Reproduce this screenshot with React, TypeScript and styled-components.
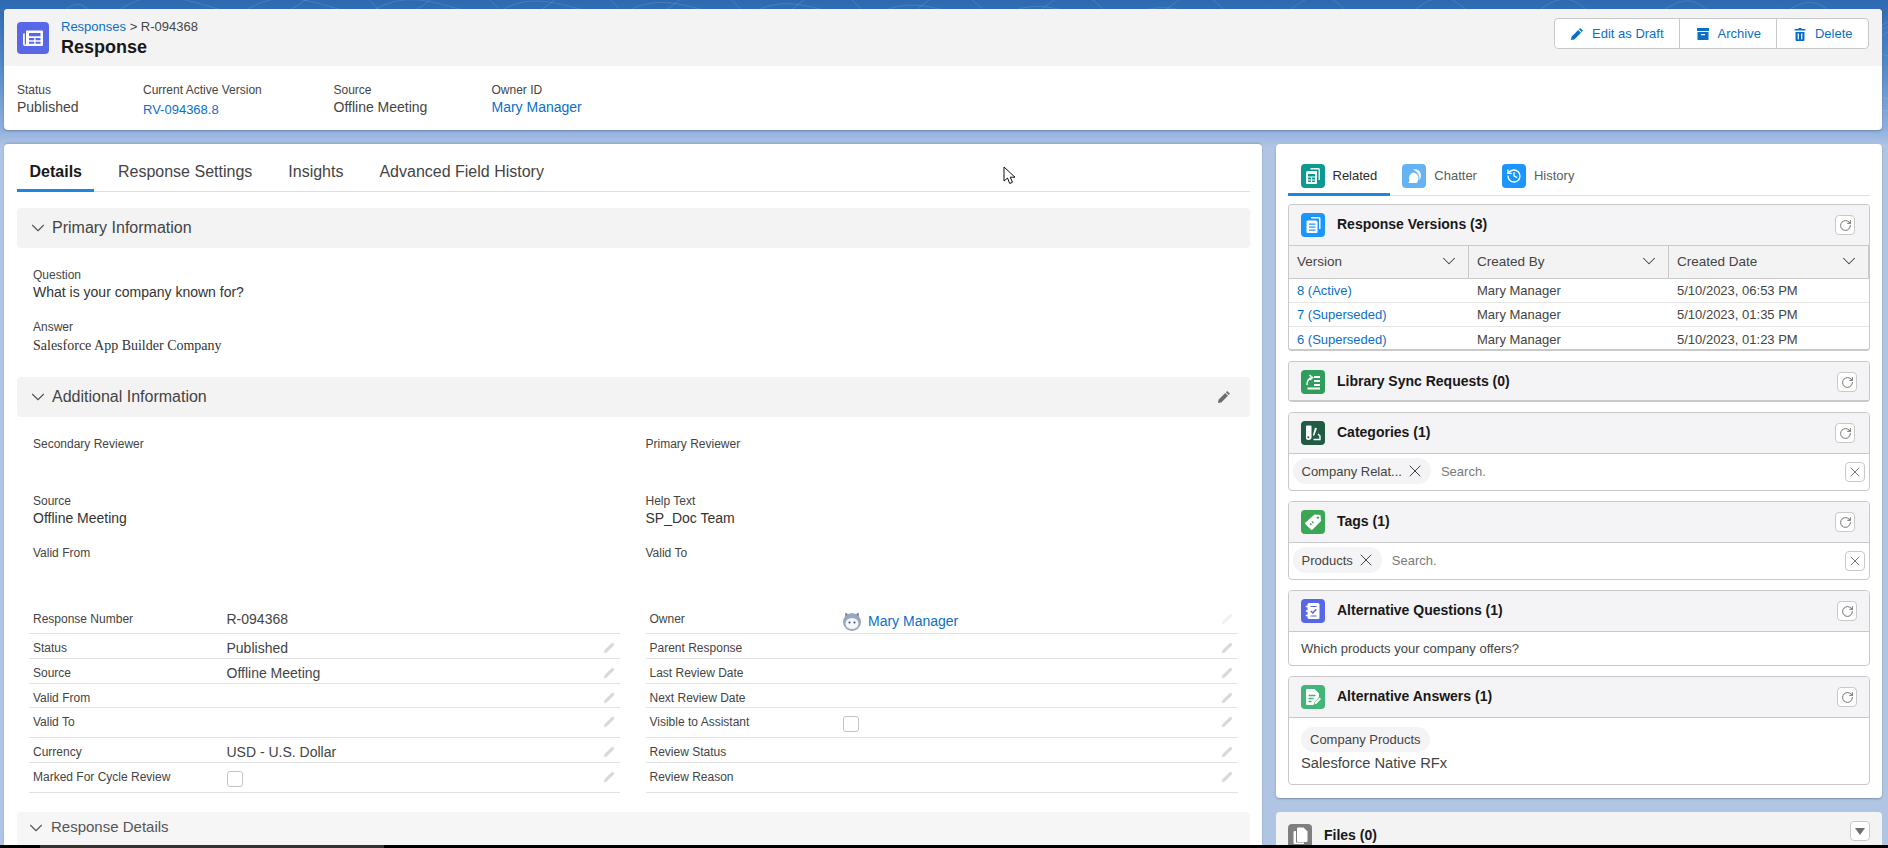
import React from "react";
import styled, { createGlobalStyle } from "styled-components";
import { ChevronDown, History, Pencil, RotateCw, X } from "lucide-react";

const GlobalStyle = createGlobalStyle`
  html, body {
    margin: 0;
    padding: 0;
    background: #b0c4e4;
    font-family: "Liberation Sans", Arial, sans-serif;
    color: #444444;
  }
  * {
    box-sizing: border-box;
  }
`;

const Page = styled.div`
  position: relative;
  width: 1888px;
  height: 848px;
  overflow: hidden;
  display: flex;
  flex-direction: column;
  background: linear-gradient(180deg, #2d69b1 0, #4f86c6 60px, #8fb0de 130px, #b0c4e4 146px, #b0c4e4 100%);
`;

const Contours = styled.svg`
  position: absolute;
  left: 0;
  top: 0;
  width: 1888px;
  height: 144px;
  pointer-events: none;
`;

const Content = styled.div`
  position: relative;
  flex: 1;
  min-height: 0;
  overflow: hidden;
  padding: 9px 6px 0 4px;
  display: flex;
  flex-direction: column;
  gap: 14px;
`;

const BottomBar = styled.div`
  flex: 0 0 3px;
  display: flex;
  background: #000000;
  padding-left: 40px;
  position: relative;
`;

const BottomThumb = styled.div`
  width: 344px;
  background: #333333;
`;

/* header card */
const HeaderCard = styled.header`
  flex: 0 0 121px;
  background: #ffffff;
  border-radius: 4px;
  overflow: hidden;
  box-shadow: 0 1px 2px rgba(60, 70, 90, 0.45);
`;

const HeaderTop = styled.div`
  height: 57px;
  background: #f4f3f4;
  display: flex;
  justify-content: space-between;
  padding: 9px 13px 0 13px;
`;

const TitleGroup = styled.div`
  display: flex;
  gap: 12px;
`;

const IconTile = styled.span<{ $bg: string; $size?: number }>`
  flex: none;
  display: inline-flex;
  align-items: center;
  justify-content: center;
  width: ${(p) => p.$size ?? 24}px;
  height: ${(p) => p.$size ?? 24}px;
  border-radius: 4px;
  background: ${(p) => p.$bg};
  color: #ffffff;
`;

const HeaderTile = styled(IconTile)`
  margin-top: 4px;
`;

const Breadcrumb = styled.div`
  margin-top: 1px;
  font-size: 13px;
  line-height: 16px;
  color: #444444;
`;

const PageTitle = styled.h1`
  margin: 1px 0 0;
  font-size: 18px;
  line-height: 22px;
  font-weight: 700;
  color: #181818;
`;

const Link = styled.a`
  color: #0b6fc9;
  text-decoration: none;
`;

const ButtonGroup = styled.div`
  display: flex;
  height: 31px;
  background: #ffffff;
  border: 1px solid #c9c9c9;
  border-radius: 4px;
`;

const ActionButton = styled.button`
  display: flex;
  align-items: center;
  gap: 8px;
  padding: 0 15.5px;
  border: 0;
  border-left: 1px solid #c9c9c9;
  background: transparent;
  color: #0b6fc9;
  font-family: inherit;
  font-size: 13px;
  &:first-child {
    border-left: 0;
  }
`;

const Stats = styled.div`
  display: grid;
  grid-template-columns: 126px 190.5px 158px auto;
  padding: 16px 13px 0;
`;

const StatLabel = styled.div`
  font-size: 12px;
  line-height: 16px;
  color: #444444;
`;

const StatValue = styled.div<{ $drop?: boolean }>`
  margin-top: ${(p) => (p.$drop ? 4 : 1)}px;
  font-size: ${(p) => (p.$drop ? 13 : 14)}px;
  line-height: 16px;
  color: #444444;
`;

/* columns */
const Columns = styled.div`
  flex: 1;
  min-height: 0;
  display: flex;
  gap: 14px;
`;

const LeftCard = styled.main`
  flex: 0 0 1258px;
  background: #ffffff;
  border-radius: 4px 4px 0 0;
  padding: 0 12px 0 13px;
  box-shadow: 0 -1px 2px rgba(60, 70, 90, 0.25);
`;

const RightColumn = styled.aside`
  flex: 1;
  display: flex;
  flex-direction: column;
  gap: 14px;
`;

const RightCard = styled.div`
  height: 654px;
  background: #ffffff;
  border-radius: 4px;
  padding: 0 12px 13px;
  box-shadow: 0 1px 2px rgba(60, 70, 90, 0.4);
`;

const FilesCard = styled.div`
  height: 60px;
  background: #f3f3f3;
  border-radius: 4px 4px 0 0;
  padding: 12px 12px 0;
  display: flex;
  align-items: flex-start;
`;

const FilesTile = styled(IconTile)`
  margin-right: 12px;
`;

const FilesTitle = styled.div`
  margin-top: 3px;
  font-size: 14px;
  line-height: 16px;
  font-weight: 700;
  color: #181818;
  flex: 1;
`;

const DropButton = styled.span`
  width: 20px;
  height: 20px;
  margin-top: -3px;
  background: #ffffff;
  border: 1px solid #c9c9c9;
  border-radius: 4px;
  display: flex;
  align-items: center;
  justify-content: center;
`;

/* left tabs */
const TabBar = styled.nav`
  height: 48px;
  display: flex;
  border-bottom: 1px solid #dfdfdf;
`;

const Tab = styled.div<{ $active?: boolean }>`
  height: 48px;
  padding: 18px 12.5px 0;
  margin-right: 11px;
  font-size: 16px;
  line-height: 20px;
  font-weight: ${(p) => (p.$active ? 700 : 400)};
  color: ${(p) => (p.$active ? "#181818" : "#444444")};
  border-bottom: 3px solid ${(p) => (p.$active ? "#1b86e3" : "transparent")};
`;

const SectionHead = styled.div<{ $muted?: boolean }>`
  height: 40px;
  border-radius: 4px;
  background: ${(p) => (p.$muted ? "#f6f6f7" : "#f3f3f3")};
  display: flex;
  align-items: ${(p) => (p.$muted ? "flex-start" : "center")};
  padding: ${(p) => (p.$muted ? "5px 19px 0 8px" : "0 19px 0 10px")};
  gap: ${(p) => (p.$muted ? 4 : 3)}px;
  color: #555555;
  margin-top: ${(p) => (p.$muted ? 19 : 16)}px;
`;

const SectionTitle = styled.div<{ $small?: boolean }>`
  flex: 1;
  font-size: ${(p) => (p.$small ? 15 : 16)}px;
  line-height: 20px;
  color: ${(p) => (p.$small ? "#555555" : "#444444")};
`;

const SectionEdit = styled.span`
  display: flex;
  color: #706e6b;
`;

const PrimaryBody = styled.div`
  padding: 19px 16px 6px;
`;

const Field = styled.div`
  margin-bottom: 18px;
  &:last-child {
    margin-bottom: 0;
  }
`;

const FieldLabel = styled.div`
  font-size: 12px;
  line-height: 16px;
  color: #444444;
`;

const FieldValue = styled.div<{ $rich?: boolean }>`
  min-height: 18px;
  margin-top: ${(p) => (p.$rich ? 2 : 0)}px;
  font-family: ${(p) => (p.$rich ? '"Liberation Serif", "Times New Roman", serif' : "inherit")};
  font-size: 14px;
  line-height: 18px;
  color: #333333;
`;

const AdditionalGrid = styled.div`
  display: grid;
  grid-template-columns: 612.5px 1fr;
  grid-template-rows: 57px 52px 60px;
  padding: 18.5px 16px 0;
`;

const DetailGrid = styled.div`
  display: grid;
  grid-template-columns: 591px 592.5px;
  column-gap: 25.5px;
  margin-left: 12px;
`;

const DetailColumn = styled.div`
  display: flex;
  flex-direction: column;
`;

const DetailRow = styled.div<{ $h: number }>`
  height: ${(p) => p.$h}px;
  display: flex;
  align-items: flex-start;
  padding: 6px 5px 0 4px;
  border-bottom: 1px solid #e2e2e2;
`;

const RowLabel = styled.div`
  flex: 0 0 193.5px;
  font-size: 12px;
  line-height: 16px;
  color: #444444;
`;

const RowValue = styled.div`
  flex: 1;
  display: flex;
  align-items: center;
  gap: 7px;
  font-size: 14px;
  line-height: 16px;
  color: #444444;
`;

const Checkbox = styled.span`
  display: block;
  width: 16px;
  height: 16px;
  margin-top: 2px;
  background: #ffffff;
  border: 1px solid #c4c4c4;
  border-radius: 3px;
`;

const RowEdit = styled.span<{ $faint?: boolean }>`
  flex: none;
  display: flex;
  margin-top: 2px;
  color: ${(p) => (p.$faint ? "#f1f1f1" : "#d9d9d9")};
`;

/* right tabs */
const RightTabs = styled.nav`
  height: 52px;
  display: flex;
  align-items: flex-start;
  border-bottom: 1px solid #dfdfdf;
  margin-bottom: 8px;
`;

const RightTab = styled.div<{ $active?: boolean }>`
  height: 52px;
  display: flex;
  align-items: flex-start;
  gap: 8px;
  padding: 20px 12.5px 0;
  font-size: 13px;
  line-height: 24px;
  color: ${(p) => (p.$active ? "#2b2b2b" : "#5c5c5c")};
  border-bottom: 3px solid ${(p) => (p.$active ? "#1b86e3" : "transparent")};
`;

const PanelStack = styled.div`
  display: flex;
  flex-direction: column;
  gap: 10px;
`;

const Panel = styled.section<{ $h: number; $closed?: boolean }>`
  height: ${(p) => p.$h}px;
  border: 1px solid #c9c9c9;
  border-bottom-width: ${(p) => (p.$closed ? 2 : 1)}px;
  border-radius: 4px;
  background: #ffffff;
  overflow: hidden;
`;

const PanelHead = styled.div<{ $tight?: boolean }>`
  height: 40px;
  display: flex;
  align-items: center;
  gap: 12px;
  padding: 0 ${(p) => (p.$tight ? 12 : 14)}px 0 12px;
  background: #f4f3f5;
`;

const PanelDivided = styled.div`
  border-top: 1px solid #c9c9c9;
`;

const PanelTitle = styled.h2`
  flex: 1;
  margin: -2px 0 0;
  font-size: 14px;
  line-height: 18px;
  font-weight: 700;
  color: #181818;
`;

const SquareButton = styled.span<{ $low?: boolean }>`
  flex: none;
  display: flex;
  align-items: center;
  justify-content: center;
  width: 20px;
  height: 20px;
  margin-top: ${(p) => (p.$low ? 2 : 0)}px;
  background: #ffffff;
  border: 1px solid #c9c9c9;
  border-radius: 4px;
  color: #706e6b;
`;

const VersionHead = styled.div`
  height: 33px;
  display: grid;
  grid-template-columns: 180px 200px 1fr;
  background: #f3f3f3;
  border-bottom: 1px solid #c9c9c9;
`;

const VersionHeadCell = styled.div`
  display: flex;
  align-items: center;
  justify-content: space-between;
  padding: 0 8px 2px 8px;
  font-size: 13.5px;
  color: #444444;
  border-right: 1px solid #c9c9c9;
`;

const VersionRow = styled.div`
  height: 24px;
  display: grid;
  grid-template-columns: 180px 200px 1fr;
  align-items: center;
  font-size: 13px;
  color: #444444;
  border-bottom: 1px solid #e5e5e5;
  &:last-child {
    border-bottom: 0;
  }
`;

const VersionCell = styled.div`
  padding-left: 8px;
`;

const PillRow = styled.div`
  height: 34px;
  display: flex;
  align-items: center;
  padding: 0 4px;
`;

const Pill = styled.span`
  display: inline-flex;
  align-items: center;
  gap: 3px;
  height: 26px;
  padding: 0 6px 0 8.5px;
  border-radius: 13px;
  background: #f4f3f5;
  font-size: 13px;
  color: #444444;
  white-space: nowrap;
`;

const SearchText = styled.span`
  flex: 1;
  margin-left: 10px;
  font-size: 13px;
  color: #7a7a7a;
`;

const PlainBody = styled.div`
  padding: 9px 12px;
  font-size: 13px;
  line-height: 16px;
  color: #444444;
`;

const AnswerBody = styled.div`
  padding: 9px 12px;
`;

const AnswerPill = styled.div`
  display: inline-flex;
  align-items: center;
  height: 25px;
  padding: 0 9px;
  border-radius: 13px;
  background: #f4f3f5;
  font-size: 13px;
  color: #444444;
`;

const AnswerText = styled.div`
  margin-top: 2px;
  font-size: 14.7px;
  line-height: 18px;
  color: #444444;
`;

const Cursor = styled.svg`
  position: absolute;
  left: 1003px;
  top: 166px;
`;

const contourPaths = Array.from({ length: 46 }, (_, i) => {
  const x = i * 42 - 20;
  const y = 20 + ((i * 37) % 110);
  const r = 28 + ((i * 13) % 40);
  return `M${x} ${y}c${r} ${-r} ${r * 2} ${r / 2} ${r * 3} ${-r / 3}s${r} ${r} ${r * 2} ${r / 4}`;
});

const EditGlyph = () => (
  <svg width="14" height="14" viewBox="0 0 14 14" fill="currentColor">
    <path d="M10.2 1l2.8 2.8-1.3 1.3-2.8-2.8zM8.2 3l2.8 2.8L4.3 12.5 1 13l.5-3.3z" />
  </svg>
);

const ArchiveGlyph = () => (
  <svg width="14" height="14" viewBox="0 0 14 14" fill="currentColor">
    <path d="M1 1h12v3H1zM1.500 5h11v7.500a.5.5 0 0 1-.5.5H2a.5.5 0 0 1-.5-.5zM5 7v1.200h4V7z" fillRule="evenodd" />
  </svg>
);

const TrashGlyph = () => (
  <svg width="14" height="14" viewBox="0 0 14 14" fill="currentColor">
    <path d="M5.500 1h3v1h4v1.600h-11V2h4zM2.500 5h9v8a1 1 0 0 1-1 1h-7a1 1 0 0 1-1-1zM4.700 6.600v5.600h1.200V6.600zM8.100 6.600v5.600h1.200V6.600z" fillRule="evenodd" />
  </svg>
);

const ResponseGlyph = () => (
  <svg width="32" height="32" viewBox="0 0 32 32" fill="none">
    <path d="M10 8.500h15a1 1 0 0 1 1 1V23a1 1 0 0 1-1 1H8a2 2 0 0 1-2-2V11.500h1.800V22a.6.6 0 0 0 1.200 0V9.500a1 1 0 0 1 1-1z" fill="#fff" />
    <path d="M12 11h11.500v3.200H12zM12 16h5.200v2.200H12zM18.500 16h5v2.200h-5zM12 19.700h5.200v2H12zM18.500 19.700h5v2h-5z" fill="#5867e8" />
  </svg>
);

const RelatedGlyph = ({ tile }: { tile: string }) => (
  <svg width="24" height="24" viewBox="0 0 24 24" fill="none">
    <path d="M9.500 4h8a1.500 1.500 0 0 1 1.500 1.500V16h-1.500V5.500h-8z" fill="#fff" opacity="0.9" />
    <path d="M7 7h8a1 1 0 0 1 1 1v11a1 1 0 0 1-1 1H6a1 1 0 0 1-1-1V9a2 2 0 0 1 2-2z" fill="#fff" />
    <path d="M7 10h7v2.500H7zM7 13.500h3V15.500H7zM11 13.500h3V15.500h-3zM7 16.500h3V18H7zM11 16.500h3V18h-3z" fill={tile} />
  </svg>
);

const VersionsGlyph = () => (
  <svg width="24" height="24" viewBox="0 0 24 24" fill="none">
    <path d="M10 4h8a1.500 1.500 0 0 1 1.500 1.500V16H18V5.500h-8z" fill="#fff" />
    <path d="M6.500 7.500h8.500a1.500 1.500 0 0 1 1.500 1.500v10a1 1 0 0 1-1 1H6.500a1 1 0 0 1-1-1V8.500a1 1 0 0 1 1-1z" fill="#fff" />
    <path d="M8 10.500h6.500v1.300H8zM8 13.500h6.500v1.300H8zM8 16.500h6.500v1.300H8z" fill="#1b96ff" />
  </svg>
);

const ChatterGlyph = () => (
  <svg width="24" height="24" viewBox="0 0 24 24" fill="none">
    <path d="M11 5.500c4.500-1.200 8.200 1.500 8 6 0 2-.6 3.500-1.500 4.500.3-4.800-2.500-8.800-6.500-10.500z" fill="#fff" opacity="0.85" />
    <path d="M11 8.500a5.700 5.700 0 0 1 5.500 5.800c0 1.800-.7 3.500-1.800 4.700H6.500l1-2.400A6 6 0 0 1 11 8.500z" fill="#fff" />
  </svg>
);

const LibraryGlyph = () => (
  <svg width="24" height="24" viewBox="0 0 24 24" fill="none" stroke="#fff" strokeWidth="1.800">
    <path d="M13 7h6M13 11h6M13 15h6M6.500 18.500h12.500" />
    <path d="M6 15c0-4 1.500-6.500 5-7.500M8.500 5L11.500 7.500 9 10" strokeWidth="1.500" />
  </svg>
);

const CategoriesGlyph = () => (
  <svg width="24" height="24" viewBox="0 0 24 24" fill="none">
    <path d="M6 4.500h3.500a1 1 0 0 1 1 1V16a3 3 0 0 1-3 3h-.5a2 2 0 0 1-2-2V5.500a1 1 0 0 1 1-1z" fill="#fff" />
    <circle cx="7.300" cy="16.300" r="1" fill="#215b43" />
    <path d="M14 6.500l2 1-2.800 7-1 .5-.2-1.200z" fill="#fff" />
    <path d="M12.500 18.500h6.500v-3.500l-2-2" stroke="#fff" strokeWidth="1.400" fill="none" />
  </svg>
);

const TagGlyph = () => (
  <svg width="24" height="24" viewBox="0 0 24 24" fill="none">
    <path d="M13.500 4.500l6 .5.500 6-8.500 8.500a1.200 1.200 0 0 1-1.700 0l-5.300-5.300a1.200 1.200 0 0 1 0-1.700z" fill="#fff" />
    <circle cx="16.800" cy="7.600" r="1.200" fill="#3ba755" />
    <path d="M9 13.500l1.500 1.500M11 11.500l1.500 1.500" stroke="#3ba755" strokeWidth="1.400" />
  </svg>
);

const QuestionsGlyph = () => (
  <svg width="24" height="24" viewBox="0 0 24 24" fill="none">
    <rect x="6.500" y="4" width="12" height="16" rx="1.500" fill="#fff" />
    <path d="M4.800 7.500h3M4.800 12h3M4.800 16.500h3" stroke="#fff" strokeWidth="1.600" />
    <path d="M9.500 7.500h6M9.500 17h6" stroke="#5867e8" strokeWidth="1.200" />
    <path d="M9.800 12l2 2 3.500-3.700" stroke="#5867e8" strokeWidth="1.500" />
  </svg>
);

const AnswersGlyph = () => (
  <svg width="24" height="24" viewBox="0 0 24 24" fill="none">
    <path d="M6 4h7.500L18 8.500V12l-5 6-.5 2H6a1 1 0 0 1-1-1V5a1 1 0 0 1 1-1z" fill="#fff" />
    <path d="M7.500 10.500h7M7.500 13.500h5M7.500 16.500h3" stroke="#41b678" strokeWidth="1.300" />
    <path d="M18.500 12.500l1.500 1.500-4.500 4.800-2 .5.500-2z" fill="#fff" />
  </svg>
);

const FilesGlyph = () => (
  <svg width="24" height="24" viewBox="0 0 24 24" fill="none">
    <path d="M10 3.500h5.500L19.500 7.500V17a1 1 0 0 1-1 1H10a1 1 0 0 1-1-1V4.500a1 1 0 0 1 1-1z" fill="#fff" />
    <path d="M6.500 7H8v11.500h8V20H6.500a1 1 0 0 1-1-1V8a1 1 0 0 1 1-1z" fill="#fff" />
  </svg>
);

const OwnerAvatar = () => (
  <svg width="18" height="20" viewBox="0 0 18 20">
    <path d="M2.500 1.500l3.500 3h6l3.500-3 .5 6H2z" fill="#5a6c86" />
    <circle cx="9" cy="11" r="9" fill="#9aa8bd" />
    <ellipse cx="9" cy="12.500" rx="6.500" ry="5.500" fill="#f4f6f9" />
    <circle cx="6.500" cy="11.500" r="1" fill="#3a4659" />
    <circle cx="11.500" cy="11.500" r="1" fill="#3a4659" />
  </svg>
);

const RefreshButton = () => (
  <SquareButton>
    <RotateCw size={13} strokeWidth={1.8} />
  </SquareButton>
);

const ClearButton = () => (
  <SquareButton $low>
    <X size={16} strokeWidth={1.4} />
  </SquareButton>
);

const SortChevron = () => <ChevronDown size={22} strokeWidth={1.1} />;

const SectionChevron = () => <ChevronDown size={22} strokeWidth={1.2} />;

const leftRows = [
  { label: "Response Number", value: "R-094368", h: 29, locked: true },
  { label: "Status", value: "Published", h: 25 },
  { label: "Source", value: "Offline Meeting", h: 25 },
  { label: "Valid From", value: "", h: 24 },
  { label: "Valid To", value: "", h: 30 },
  { label: "Currency", value: "USD - U.S. Dollar", h: 25 },
  { label: "Marked For Cycle Review", value: "", h: 30, check: true },
];

const rightRows = [
  { label: "Owner", h: 29, owner: true },
  { label: "Parent Response", h: 25 },
  { label: "Last Review Date", h: 25 },
  { label: "Next Review Date", h: 24 },
  { label: "Visible to Assistant", h: 30, check: true },
  { label: "Review Status", h: 25 },
  { label: "Review Reason", h: 30 },
];

const versions = [
  { name: "8 (Active)", date: "5/10/2023, 06:53 PM" },
  { name: "7 (Superseded)", date: "5/10/2023, 01:35 PM" },
  { name: "6 (Superseded)", date: "5/10/2023, 01:23 PM" },
];

const RowPencil = ({ faint }: { faint?: boolean }) => (
  <RowEdit $faint={faint}>
    <Pencil size={12} fill="currentColor" strokeWidth={1} />
  </RowEdit>
);

export default function App() {
  return (
    <>
      <GlobalStyle />
      <Page>
        <Contours viewBox="0 0 1888 144" fill="none" stroke="#ffffff" strokeOpacity="0.12">
          {contourPaths.map((d) => (
            <path key={d} d={d} />
          ))}
        </Contours>
        <Content>
          <HeaderCard>
            <HeaderTop>
              <TitleGroup>
                <HeaderTile $bg="#5867e8" $size={32}>
                  <ResponseGlyph />
                </HeaderTile>
                <div>
                  <Breadcrumb>
                    <Link>Responses</Link> &gt; R-094368
                  </Breadcrumb>
                  <PageTitle>Response</PageTitle>
                </div>
              </TitleGroup>
              <ButtonGroup>
                <ActionButton>
                  <EditGlyph />
                  Edit as Draft
                </ActionButton>
                <ActionButton>
                  <ArchiveGlyph />
                  Archive
                </ActionButton>
                <ActionButton>
                  <TrashGlyph />
                  Delete
                </ActionButton>
              </ButtonGroup>
            </HeaderTop>
            <Stats>
              <div>
                <StatLabel>Status</StatLabel>
                <StatValue>Published</StatValue>
              </div>
              <div>
                <StatLabel>Current Active Version</StatLabel>
                <StatValue $drop>
                  <Link>RV-094368.8</Link>
                </StatValue>
              </div>
              <div>
                <StatLabel>Source</StatLabel>
                <StatValue>Offline Meeting</StatValue>
              </div>
              <div>
                <StatLabel>Owner ID</StatLabel>
                <StatValue>
                  <Link>Mary Manager</Link>
                </StatValue>
              </div>
            </Stats>
          </HeaderCard>

          <Columns>
            <LeftCard>
              <TabBar>
                <Tab $active>Details</Tab>
                <Tab>Response Settings</Tab>
                <Tab>Insights</Tab>
                <Tab>Advanced Field History</Tab>
              </TabBar>

              <SectionHead>
                <SectionChevron />
                <SectionTitle>Primary Information</SectionTitle>
              </SectionHead>
              <PrimaryBody>
                <Field>
                  <FieldLabel>Question</FieldLabel>
                  <FieldValue>What is your company known for?</FieldValue>
                </Field>
                <Field>
                  <FieldLabel>Answer</FieldLabel>
                  <FieldValue $rich>Salesforce App Builder Company</FieldValue>
                </Field>
              </PrimaryBody>

              <SectionHead>
                <SectionChevron />
                <SectionTitle>Additional Information</SectionTitle>
                <SectionEdit>
                  <EditGlyph />
                </SectionEdit>
              </SectionHead>
              <AdditionalGrid>
                <div>
                  <FieldLabel>Secondary Reviewer</FieldLabel>
                </div>
                <div>
                  <FieldLabel>Primary Reviewer</FieldLabel>
                </div>
                <div>
                  <FieldLabel>Source</FieldLabel>
                  <FieldValue>Offline Meeting</FieldValue>
                </div>
                <div>
                  <FieldLabel>Help Text</FieldLabel>
                  <FieldValue>SP_Doc Team</FieldValue>
                </div>
                <div>
                  <FieldLabel>Valid From</FieldLabel>
                </div>
                <div>
                  <FieldLabel>Valid To</FieldLabel>
                </div>
              </AdditionalGrid>

              <DetailGrid>
                <DetailColumn>
                  {leftRows.map((row) => (
                    <DetailRow key={row.label} $h={row.h}>
                      <RowLabel>{row.label}</RowLabel>
                      <RowValue>{row.check ? <Checkbox /> : row.value}</RowValue>
                      {!row.locked && <RowPencil />}
                    </DetailRow>
                  ))}
                </DetailColumn>
                <DetailColumn>
                  {rightRows.map((row) => (
                    <DetailRow key={row.label} $h={row.h}>
                      <RowLabel>{row.label}</RowLabel>
                      <RowValue>
                        {row.owner && (
                          <>
                            <OwnerAvatar />
                            <Link>Mary Manager</Link>
                          </>
                        )}
                        {row.check && <Checkbox />}
                      </RowValue>
                      <RowPencil faint={row.owner} />
                    </DetailRow>
                  ))}
                </DetailColumn>
              </DetailGrid>

              <SectionHead $muted>
                <SectionChevron />
                <SectionTitle $small>Response Details</SectionTitle>
              </SectionHead>
            </LeftCard>

            <RightColumn>
              <RightCard>
                <RightTabs>
                  <RightTab $active>
                    <IconTile $bg="#0b9a92">
                      <RelatedGlyph tile="#0b9a92" />
                    </IconTile>
                    Related
                  </RightTab>
                  <RightTab>
                    <IconTile $bg="#65b3f3">
                      <ChatterGlyph />
                    </IconTile>
                    Chatter
                  </RightTab>
                  <RightTab>
                    <IconTile $bg="#1b96ff">
                      <History size={16} strokeWidth={2} />
                    </IconTile>
                    History
                  </RightTab>
                </RightTabs>

                <PanelStack>
                  <Panel $h={147} $closed>
                    <PanelHead>
                      <IconTile $bg="#1b96ff">
                        <VersionsGlyph />
                      </IconTile>
                      <PanelTitle>Response Versions (3)</PanelTitle>
                      <RefreshButton />
                    </PanelHead>
                    <PanelDivided>
                      <VersionHead>
                        <VersionHeadCell>
                          Version
                          <SortChevron />
                        </VersionHeadCell>
                        <VersionHeadCell>
                          Created By
                          <SortChevron />
                        </VersionHeadCell>
                        <VersionHeadCell>
                          Created Date
                          <SortChevron />
                        </VersionHeadCell>
                      </VersionHead>
                      {versions.map((v) => (
                        <VersionRow key={v.name}>
                          <VersionCell>
                            <Link>{v.name}</Link>
                          </VersionCell>
                          <VersionCell>Mary Manager</VersionCell>
                          <VersionCell>{v.date}</VersionCell>
                        </VersionRow>
                      ))}
                    </PanelDivided>
                  </Panel>

                  <Panel $h={41} $closed>
                    <PanelHead $tight>
                      <IconTile $bg="#2f9e5d">
                        <LibraryGlyph />
                      </IconTile>
                      <PanelTitle>Library Sync Requests (0)</PanelTitle>
                      <RefreshButton />
                    </PanelHead>
                  </Panel>

                  <Panel $h={79}>
                    <PanelHead>
                      <IconTile $bg="#215b43">
                        <CategoriesGlyph />
                      </IconTile>
                      <PanelTitle>Categories (1)</PanelTitle>
                      <RefreshButton />
                    </PanelHead>
                    <PanelDivided>
                      <PillRow>
                        <Pill>
                          Company Relat...
                          <X size={20} strokeWidth={1.2} />
                        </Pill>
                        <SearchText>Search.</SearchText>
                        <ClearButton />
                      </PillRow>
                    </PanelDivided>
                  </Panel>

                  <Panel $h={79}>
                    <PanelHead>
                      <IconTile $bg="#3ba755">
                        <TagGlyph />
                      </IconTile>
                      <PanelTitle>Tags (1)</PanelTitle>
                      <RefreshButton />
                    </PanelHead>
                    <PanelDivided>
                      <PillRow>
                        <Pill>
                          Products
                          <X size={20} strokeWidth={1.2} />
                        </Pill>
                        <SearchText>Search.</SearchText>
                        <ClearButton />
                      </PillRow>
                    </PanelDivided>
                  </Panel>

                  <Panel $h={76}>
                    <PanelHead $tight>
                      <IconTile $bg="#5867e8">
                        <QuestionsGlyph />
                      </IconTile>
                      <PanelTitle>Alternative Questions (1)</PanelTitle>
                      <RefreshButton />
                    </PanelHead>
                    <PanelDivided>
                      <PlainBody>Which products your company offers?</PlainBody>
                    </PanelDivided>
                  </Panel>

                  <Panel $h={109}>
                    <PanelHead $tight>
                      <IconTile $bg="#41b678">
                        <AnswersGlyph />
                      </IconTile>
                      <PanelTitle>Alternative Answers (1)</PanelTitle>
                      <RefreshButton />
                    </PanelHead>
                    <PanelDivided>
                      <AnswerBody>
                        <AnswerPill>Company Products</AnswerPill>
                        <AnswerText>Salesforce Native RFx</AnswerText>
                      </AnswerBody>
                    </PanelDivided>
                  </Panel>
                </PanelStack>
              </RightCard>

              <FilesCard>
                <FilesTile $bg="#7f7f7f">
                  <FilesGlyph />
                </FilesTile>
                <FilesTitle>Files (0)</FilesTitle>
                <DropButton>
                  <svg width="10" height="7" viewBox="0 0 10 7">
                    <path d="M0 0h10L5 7z" fill="#706e6b" />
                  </svg>
                </DropButton>
              </FilesCard>
            </RightColumn>
          </Columns>
        </Content>
        <BottomBar>
          <BottomThumb />
        </BottomBar>
        <Cursor width="13" height="19" viewBox="0 0 13 19">
          <path d="M1 1v14l3.500-3 2.200 5.500 2.800-1.200-2.300-5.100H12z" fill="#fff" stroke="#111" strokeWidth="1" />
        </Cursor>
      </Page>
    </>
  );
}
